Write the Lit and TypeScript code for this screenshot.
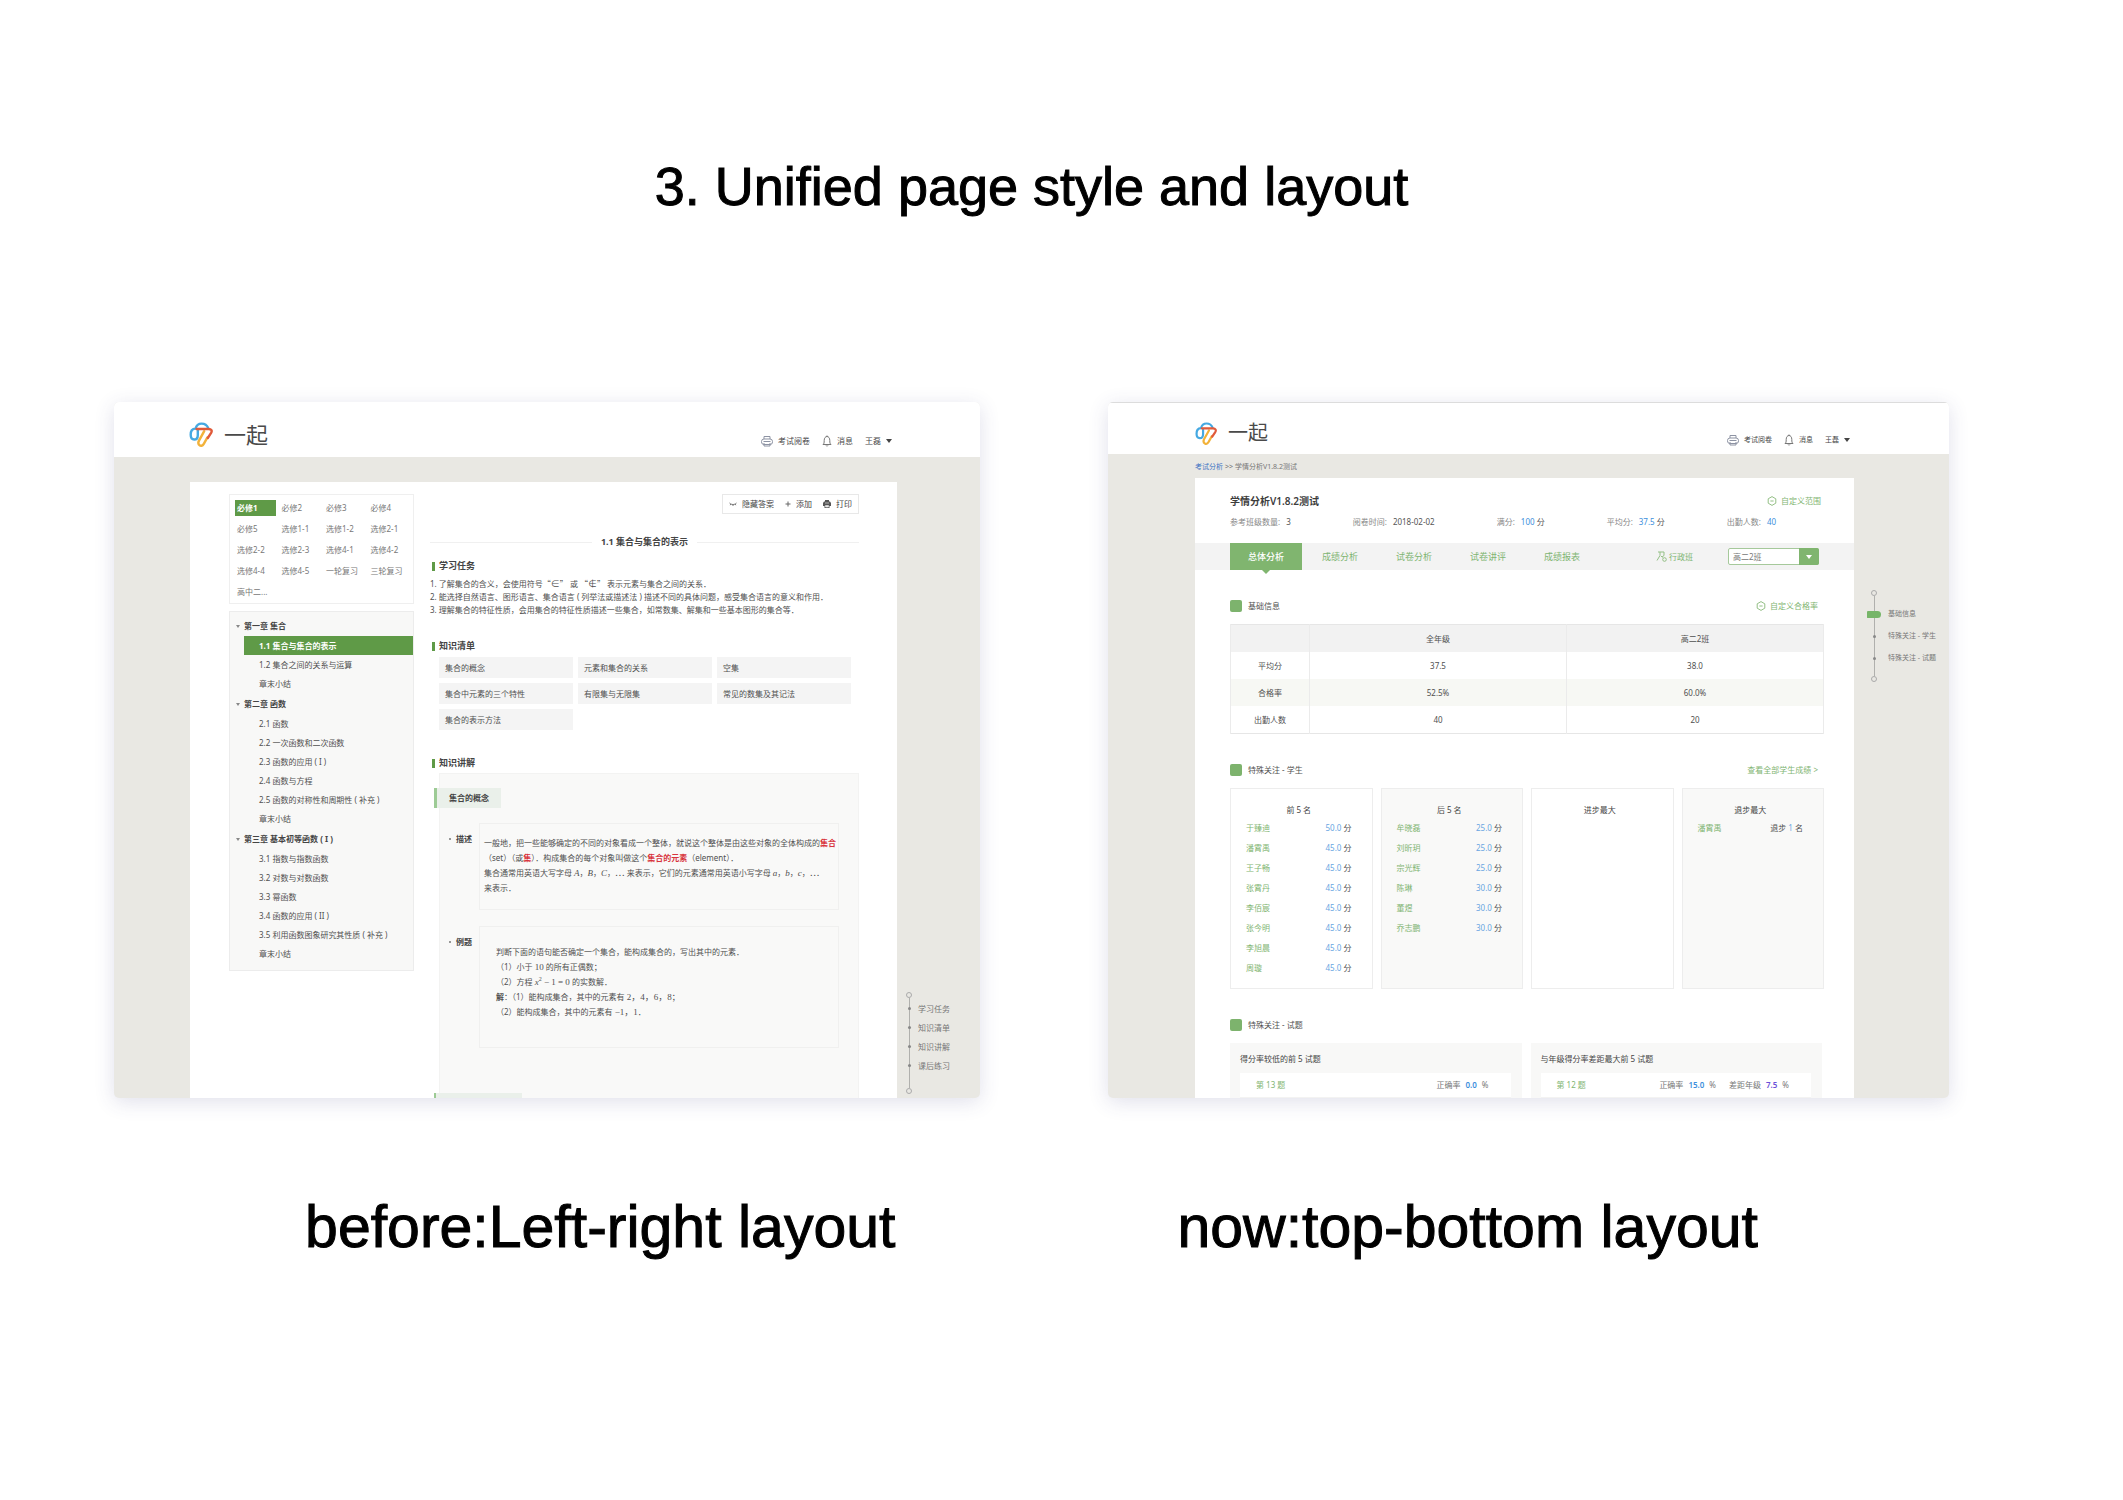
import { LitElement, html, css, svg, nothing } from "lit";
import { customElement, property } from "lit/decorators.js";
import { classMap } from "lit/directives/class-map.js";

const base = css`
  *,
  *::before,
  *::after {
    box-sizing: border-box;
  }
  :host {
    display: block;
    font-family: "Noto Sans", "Noto Sans CJK SC", sans-serif;
    font-size: 8px;
    line-height: 16px;
    color: #505050;
  }
  h1,
  h2,
  h3,
  h4,
  p,
  ul,
  ol,
  dl,
  dd {
    margin: 0;
    padding: 0;
    font-weight: 400;
    font-size: inherit;
  }
  ul,
  ol {
    list-style: none;
  }
  button {
    font: inherit;
    color: inherit;
    background: none;
    border: 0;
    margin: 0;
    padding: 0;
    text-align: left;
    white-space: nowrap;
    cursor: pointer;
  }
  a {
    color: inherit;
    text-decoration: none;
    white-space: nowrap;
  }
  svg {
    display: block;
    flex: none;
  }
`;

const logo = svg`
  <g fill="none" stroke-width="2.4" stroke-linejoin="round" stroke-linecap="round">
    <path d="M8.800 8.500v4.700c0 2.600-1.400 4.300-3.600 4.300S1.700 15.600 1.700 12.800c0-3.800 1.200-6.200 4.900-6.200C7.400 3.300 9.400 1.600 12.600 1.600c3.200 0 5.400 1.400 6.600 4.400" stroke="#45a9e2"/>
    <path d="M15.200 9.200 10 18.600c-1.200 2.400-.6 4 .8 4.800 1.500.8 3 .2 4-1.600L18.400 15.400" stroke="#f2b23a"/>
    <path d="M7.600 7H19.600c2.900 0 3.800 1.700 2.500 3.900L18.800 16" stroke="#e05a3a"/>
  </g>`;

const printer = svg`
  <g fill="none" stroke="#8d93a3" stroke-width="1">
    <path d="M3 4V1.500h6V4"/>
    <rect x=".5" y="4" width="11" height="5.500" rx="2.500"/>
    <path d="M2.500 6.500h7M3 8v3h6V8"/>
  </g>`;

const bell = svg`
  <g fill="none" stroke="#777" stroke-width="1">
    <path d="M1 9.500c1-.8 1.200-1.500 1.200-4C2.200 3 3.400 1.500 5 1.500s2.800 1.500 2.800 4c0 2.500.2 3.200 1.200 4z"/>
    <path d="M4 10.500c.4.800 1.600.8 2 0M5 .5v1"/>
  </g>`;

const target = svg`
  <g fill="none" stroke="#93bf85" stroke-width="1">
    <path d="M5 .6 8.800 2.800v4.400L5 9.400 1.200 7.200V2.800z" stroke-linejoin="round"/>
    <path d="M3.400 5h3.200"/>
  </g>`;

@customElement("app-header")
class AppHeader extends LitElement {
  @property({ type: Boolean, reflect: true }) compact = false;

  static styles = [
    base,
    css`
      .bar {
        display: flex;
        align-items: center;
        justify-content: space-between;
        padding: 12px 88px 4px 75px;
        height: 55px;
        background: #fff;
      }
      .brand {
        display: flex;
        align-items: center;
        gap: 11px;
        font-size: 22px;
        line-height: 26px;
        color: #4a4a4a;
      }
      .mark {
        margin-top: 2px;
      }
      .links {
        display: flex;
        align-items: center;
        padding-top: 14px;
        gap: 12px;
        color: #484848;
      }
      .link {
        display: flex;
        align-items: center;
        gap: 5px;
      }
      :host([compact]) .bar {
        height: 52px;
        padding: 12px 99px 4px 87px;
        border-top: 1px solid #dcdcdc;
      }
      :host([compact]) .brand {
        font-size: 20px;
      }
      :host([compact]) .links {
        font-size: 7px;
      }
    `,
  ];

  render() {
    const s = this.compact ? 22 : 24;
    return html`<header class="bar">
      <a class="brand" href="#home">
        <svg class="mark" width=${s} height=${s + 1} viewBox="0 0 24 25" aria-hidden="true">${logo}</svg>一起
      </a>
      <nav class="links">
        <a class="link" href="#marking"
          ><svg width="12" height="12" viewBox="0 0 12 12" aria-hidden="true">${printer}</svg>考试阅卷</a
        >
        <a class="link" href="#messages"
          ><svg width="10" height="12" viewBox="0 0 10 12" aria-hidden="true">${bell}</svg>消息</a
        >
        <button class="link">
          王磊<svg width="6" height="4" viewBox="0 0 6 4" aria-hidden="true"><path d="M0 0h6L3 4z" fill="#444" /></svg>
        </button>
      </nav>
    </header>`;
  }
}

@customElement("anchor-rail")
class AnchorRail extends LitElement {
  @property({ type: Array }) items: string[] = [];
  @property({ type: Number }) active = -1;
  @property({ type: Boolean, reflect: true }) compact = false;

  static styles = [
    base,
    css`
      .rail {
        display: flex;
        flex-direction: column;
        align-items: flex-start;
        color: #777;
      }
      .end {
        width: 6px;
        height: 6px;
        margin-left: 4px;
        border: 1px solid #aaa;
        border-radius: 50%;
      }
      .link,
      .line {
        display: grid;
        grid-template-columns: 14px auto;
        gap: 2px;
        align-items: center;
        height: 19px;
        background: linear-gradient(#b0b0ad, #b0b0ad) 7px 0 / 1px 100% no-repeat;
      }
      .dot {
        justify-self: center;
        width: 3px;
        height: 3px;
        border-radius: 50%;
        background: #888;
      }
      .line {
        height: 1px;
      }
      .line.tail {
        height: 13px;
      }
      .mark {
        width: 14px;
        height: 7px;
        border-radius: 1px 4px 4px 1px;
        background: #76b568;
      }
      :host([compact]) .rail {
        font-size: 7px;
      }
      :host([compact]) .link {
        height: 22px;
        gap: 7px;
      }
      :host([compact]) .line {
        height: 7px;
      }
    `,
  ];

  render() {
    return html`<nav class="rail">
      <span class="end"></span><span class="line"></span>
      ${this.items.map(
        (t, i) => html`<a class="link" href="#s${i}"><span class=${i === this.active ? "mark" : "dot"}></span>${t}</a>`
      )}
      <span class="line tail"></span><span class="end"></span>
    </nav>`;
  }
}

const books = [
  "必修1", "必修2", "必修3", "必修4", "必修5", "选修1-1", "选修1-2", "选修2-1", "选修2-2",
  "选修2-3", "选修4-1", "选修4-2", "选修4-4", "选修4-5", "一轮复习", "三轮复习", "高中二...",
];

const chapters = [
  { name: "第一章 集合", items: ["1.1 集合与集合的表示", "1.2 集合之间的关系与运算", "章末小结"] },
  {
    name: "第二章 函数",
    items: ["2.1 函数", "2.2 一次函数和二次函数", "2.3 函数的应用 ( I )", "2.4 函数与方程", "2.5 函数的对称性和周期性 ( 补充 )", "章末小结"],
  },
  {
    name: "第三章 基本初等函数 ( I )",
    items: ["3.1 指数与指数函数", "3.2 对数与对数函数", "3.3 幂函数", "3.4 函数的应用 ( II )", "3.5 利用函数图象研究其性质 ( 补充 )", "章末小结"],
  },
];

const points = ["集合的概念", "元素和集合的关系", "空集", "集合中元素的三个特性", "有限集与无限集", "常见的数集及其记法", "集合的表示方法"];

@customElement("lesson-page")
class LessonPage extends LitElement {
  static styles = [
    base,
    css`
      :host {
        display: flex;
        flex-direction: column;
        background: #e9e8e3;
      }
      .body {
        flex: 1;
        display: grid;
        grid-template-columns: minmax(0, 1fr) 83px;
        padding: 25px 0 0 76px;
      }
      .sheet {
        display: grid;
        grid-template-columns: 185px minmax(0, 1fr);
        gap: 16px;
        padding: 12px 38px 0 39px;
        background: #fff;
      }
      .side {
        align-self: start;
        display: flex;
        flex-direction: column;
        gap: 7px;
      }
      .books {
        display: grid;
        grid-template-columns: repeat(4, minmax(0, 1fr));
        gap: 5px 4px;
        padding: 5px 4px 3px 5px;
        border: 1px solid #efefef;
        color: #777;
      }
      .book {
        width: 100%;
        padding-left: 2px;
      }
      .book.on {
        background: #5f9a47;
        color: #fff;
        font-weight: 700;
      }
      .tree {
        display: flex;
        flex-direction: column;
        gap: 1px;
        padding: 4px 0 7px;
        border: 1px solid #ececec;
        background: #f8f8f7;
      }
      .chapter {
        display: flex;
        align-items: center;
        gap: 4px;
        padding-left: 6px;
        line-height: 20px;
        font-weight: 700;
        color: #444;
      }
      .lesson {
        display: block;
        margin-left: 14px;
        padding-left: 15px;
        line-height: 19px;
      }
      .lesson.on {
        background: #5f9a47;
        color: #fff;
        font-weight: 700;
      }
      .main {
        display: flex;
        flex-direction: column;
        min-width: 0;
      }
      .tools {
        align-self: flex-end;
        display: flex;
        gap: 11px;
        padding: 1px 6px;
        border: 1px solid #e8e8e8;
      }
      .tool {
        display: flex;
        align-items: center;
        gap: 5px;
        color: #444;
      }
      .title {
        display: flex;
        align-items: center;
        gap: 9px;
        margin-top: 20px;
        font-size: 9px;
        font-weight: 700;
        color: #444;
      }
      .title::before,
      .title::after {
        content: "";
        flex: 1;
        border-top: 1px solid #f0f0f0;
      }
      .sec {
        display: flex;
        align-items: center;
        gap: 4px;
        margin-left: 2px;
        font-size: 9px;
        font-weight: 700;
        color: #444;
      }
      .sec::before {
        content: "";
        width: 3px;
        height: 9px;
        background: #5f9a47;
      }
      .first {
        margin-top: 8px;
      }
      .tasks {
        margin: 3px 0 22px;
        line-height: 13px;
        white-space: nowrap;
      }
      .tasks li {
        height: 13px;
      }
      .points {
        display: grid;
        grid-template-columns: repeat(3, minmax(0, 1fr));
        gap: 5px;
        margin: 3px 8px 25px 9px;
      }
      .point {
        padding-left: 6px;
        line-height: 21px;
        background: #f4f4f4;
      }
      .panel {
        flex: 1;
        display: flex;
        flex-direction: column;
        margin: 2px 0 0 9px;
        border: 1px solid #f3f3f2;
        border-bottom: 0;
        background: #f9f9f8;
      }
      .tag {
        align-self: flex-start;
        margin: 14px 0 15px -6px;
        padding: 0 12px;
        border-left: 3px solid #9dcb95;
        line-height: 20px;
        font-weight: 700;
        color: #444;
        background: #eaf0ea;
      }
      .entry {
        display: grid;
        grid-template-columns: 30px minmax(0, 1fr);
        padding: 0 19px 16px 9px;
      }
      .label {
        display: flex;
        align-items: center;
        gap: 5px;
        height: 16px;
        margin-top: 8px;
        font-weight: 700;
        color: #444;
      }
      .label::before {
        content: "";
        width: 2px;
        height: 2px;
        border-radius: 50%;
        background: #777;
      }
      .box {
        display: grid;
        align-content: start;
        grid-auto-rows: 15px;
        padding: 11px 4px 14px;
        border: 1px solid #f0f0ef;
        line-height: 15px;
        white-space: nowrap;
      }
      .box.example {
        padding: 17px 16px 28px;
      }
      .red {
        font-weight: 700;
        color: #d8343c;
      }
      .math {
        font-family: "Liberation Serif", "Noto Sans CJK SC", serif;
        font-size: 9px;
      }
      .wide {
        font-family: "Noto Sans CJK SC", sans-serif;
      }
      sup {
        font-size: 6px;
        line-height: 0;
      }
      .next {
        width: 88px;
        height: 5px;
        margin: auto 0 0 -6px;
        border-left: 2px solid #9dcb95;
        background: #eaf0ea;
      }
      .gutter {
        align-self: end;
        padding-left: 5px;
        padding-bottom: 4px;
      }
    `,
  ];

  render() {
    const m = (t: unknown) => html`<span class="math">${t}</span>`;
    const i = (t: string) => html`<i class="math">${t}</i>`;
    const q = (t: string) => html`<span class="wide">“</span>${m(t)}<span class="wide">”</span>`;
    return html`
      <app-header></app-header>
      <div class="body">
        <div class="sheet">
          <aside class="side">
            <div class="books">
              ${books.map((b, k) => html`<button class=${classMap({ book: true, on: k === 0 })}>${b}</button>`)}
            </div>
            <ul class="tree">
              ${chapters.map(
                (c, k) => html`<li>
                  <button class="chapter">
                    <svg width="4" height="3" viewBox="0 0 4 3" aria-hidden="true"><path d="M0 0h4L2 3z" fill="#888" /></svg>${c.name}
                  </button>
                  ${c.items.map(
                    (t, n) => html`<a href="#l${k}${n}" class=${classMap({ lesson: true, on: k + n === 0 })}>${t}</a>`
                  )}
                </li>`
              )}
            </ul>
          </aside>
          <main class="main">
            <div class="tools">
              <button class="tool">
                <svg width="8" height="8" viewBox="0 0 8 8" aria-hidden="true">
                  <path d="M.5 3C2.500 5 5.500 5 7.500 3M4 4.500V6M1.800 4 1.200 5.200M6.200 4l.6 1.200" fill="none" stroke="#777" />
                </svg>隐藏答案
              </button>
              <button class="tool">
                <svg width="6" height="6" viewBox="0 0 6 6" aria-hidden="true"><path d="M3 .5v5M.5 3h5" stroke="#666" /></svg>添加
              </button>
              <button class="tool">
                <svg width="8" height="8" viewBox="0 0 8 8" aria-hidden="true">
                  <path d="M2 0h4v1.500h1L8 3v3H6.500v2h-5V6H0V3l1-1.500h1z" fill="#555" />
                  <path d="M2 3h4M2.500 5.500h3v1.500h-3z" stroke="#ddd" stroke-width=".7" fill="#eee" />
                </svg>打印
              </button>
            </div>
            <h1 class="title">1.1 集合与集合的表示</h1>
            <h2 class="sec first">学习任务</h2>
            <ol class="tasks">
              <li>1. 了解集合的含义，会使用符号${q("∈")} 或 ${q("∉")} 表示元素与集合之间的关系．</li>
              <li>2. 能选择自然语言、图形语言、集合语言 ( 列举法或描述法 ) 描述不同的具体问题，感受集合语言的意义和作用．</li>
              <li>3. 理解集合的特征性质，会用集合的特征性质描述一些集合，如常数集、解集和一些基本图形的集合等．</li>
            </ol>
            <h2 class="sec">知识清单</h2>
            <ul class="points">
              ${points.map((p) => html`<li class="point">${p}</li>`)}
            </ul>
            <h2 class="sec">知识讲解</h2>
            <section class="panel">
              <h3 class="tag">集合的概念</h3>
              <div class="entry">
                <h4 class="label">描述</h4>
                <div class="box">
                  <p>一般地，把一些能够确定的不同的对象看成一个整体，就说这个整体是由这些对象的全体构成的<b class="red">集合</b></p>
                  <p>（set）（或<b class="red">集</b>）．构成集合的每个对象叫做这个<b class="red">集合的元素</b>（element）．</p>
                  <p>集合通常用英语大写字母 ${i("A")}，${i("B")}，${i("C")}，${m("⋯")} 来表示，它们的元素通常用英语小写字母 ${i("a")}，${i("b")}，${i("c")}，${m("⋯")}</p>
                  <p>来表示．</p>
                </div>
              </div>
              <div class="entry">
                <h4 class="label">例题</h4>
                <div class="box example">
                  <p>判断下面的语句能否确定一个集合，能构成集合的，写出其中的元素．</p>
                  <p>（1）小于 ${m("10")} 的所有正偶数；</p>
                  <p>（2）方程 ${m(html`<i>x</i><sup>2</sup> − 1 = 0`)} 的实数解．</p>
                  <p><b>解</b>：（1）能构成集合，其中的元素有 ${m("2，4，6，8")}；</p>
                  <p>（2）能构成集合，其中的元素有 ${m("−1，1")}．</p>
                </div>
              </div>
              <div class="next"></div>
            </section>
          </main>
        </div>
        <anchor-rail class="gutter" .items=${["学习任务", "知识清单", "知识讲解", "课后练习"]}></anchor-rail>
      </div>
    `;
  }
}

const stats: [string, string, string, boolean][] = [
  ["参考班级数量:", "3", "", false],
  ["阅卷时间:", "2018-02-02", "", false],
  ["满分:", "100", "分", true],
  ["平均分:", "37.5", "分", true],
  ["出勤人数:", "40", "", true],
];

const rows = [
  ["平均分", "37.5", "38.0"],
  ["合格率", "52.5%", "60.0%"],
  ["出勤人数", "40", "20"],
];

type Entry = [string, string, string, string];
const groups: { title: string; list: Entry[] }[] = [
  {
    title: "前 5 名",
    list: [
      ["于臻迪", "", "50.0", "分"],
      ["潘霄禹", "", "45.0", "分"],
      ["王子畅", "", "45.0", "分"],
      ["张霄丹", "", "45.0", "分"],
      ["李佰宸", "", "45.0", "分"],
      ["张今明", "", "45.0", "分"],
      ["李旭晨", "", "45.0", "分"],
      ["周璇", "", "45.0", "分"],
    ],
  },
  {
    title: "后 5 名",
    list: [
      ["牟晓磊", "", "25.0", "分"],
      ["刘昕玥", "", "25.0", "分"],
      ["宗光辉", "", "25.0", "分"],
      ["陈琳", "", "30.0", "分"],
      ["董煜", "", "30.0", "分"],
      ["乔志鹏", "", "30.0", "分"],
    ],
  },
  { title: "进步最大", list: [] },
  { title: "退步最大", list: [["潘霄禹", "退步", "1", "名"]] },
];

@customElement("report-page")
class ReportPage extends LitElement {
  static styles = [
    base,
    css`
      :host {
        display: flex;
        flex-direction: column;
        background: #e9e8e3;
      }
      .body {
        flex: 1;
        display: grid;
        grid-template-columns: minmax(0, 1fr) 95px;
        grid-template-rows: 24px 1fr;
        padding-left: 87px;
      }
      .crumbs {
        grid-column: 1 / -1;
        display: flex;
        gap: 2px;
        padding-top: 1px;
        line-height: 23px;
        font-size: 7px;
        color: #777;
      }
      .crumbs a {
        color: #3f74c4;
      }
      .sheet {
        display: flex;
        flex-direction: column;
        background: #fff;
      }
      .top {
        padding: 13px 33px 13px 35px;
      }
      .line {
        display: flex;
        align-items: center;
        justify-content: space-between;
      }
      .name {
        font-size: 10px;
        line-height: 20px;
        font-weight: 600;
        color: #3c3c3c;
      }
      .action {
        display: flex;
        align-items: center;
        gap: 4px;
        color: #7fb572;
      }
      .stats {
        display: flex;
        gap: 62px;
        padding-top: 3px;
        white-space: nowrap;
      }
      .stat {
        display: flex;
        gap: 6px;
        color: #888;
      }
      .stat dd {
        color: #555;
      }
      .blue {
        color: #3d8fdc;
      }
      .tabs {
        display: flex;
        align-items: center;
        gap: 2px;
        height: 27px;
        padding: 0 35px;
        background: #f3f3f3;
      }
      .tab {
        position: relative;
        width: 72px;
        line-height: 27px;
        font-size: 9px;
        text-align: center;
        color: #7fb572;
      }
      .tab.on {
        background: #80b56f;
        color: #fff;
        font-weight: 500;
      }
      .tab.on::after {
        content: "";
        position: absolute;
        top: 100%;
        left: calc(50% - 4px);
        border: 4px solid transparent;
        border-top-color: #80b56f;
        border-bottom: 0;
      }
      .kind {
        margin-left: auto;
        gap: 2px;
      }
      .picker {
        position: relative;
        margin-left: 33px;
      }
      .select {
        display: block;
        width: 91px;
        height: 17px;
        padding: 0 24px 0 4px;
        border: 1px solid #a6c99b;
        border-radius: 2px;
        appearance: none;
        font: inherit;
        color: #777;
        background: #fff;
      }
      .arrow {
        position: absolute;
        top: 0;
        right: 0;
        display: grid;
        place-items: center;
        width: 20px;
        height: 17px;
        border-radius: 0 2px 2px 0;
        background: #80b56f;
        pointer-events: none;
      }
      .content {
        display: flex;
        flex-direction: column;
        padding: 28px 30px 0 35px;
      }
      .sec {
        display: flex;
        align-items: center;
        gap: 6px;
      }
      .sec::before {
        content: "";
        width: 12px;
        height: 12px;
        border-radius: 2px;
        background: #7db36d;
      }
      .head {
        padding-right: 6px;
      }
      table {
        width: 100%;
        margin: 10px 0 28px;
        border: 1px solid #e6e6e6;
        border-collapse: collapse;
        table-layout: fixed;
      }
      .first {
        width: 79px;
      }
      th,
      td {
        padding: 0;
        border: solid #ebebeb;
        border-width: 0 1px;
        line-height: 27px;
        font-weight: 400;
        text-align: center;
      }
      thead th {
        background: #f2f2f2;
      }
      tbody tr:nth-child(2) {
        background: #f7f8f4;
      }
      .groups {
        display: grid;
        grid-template-columns: repeat(4, minmax(0, 1fr));
        gap: 8px;
        margin: 10px 0 28px;
      }
      .group {
        padding: 13px 20px 10px 15px;
        border: 1px solid #ededed;
      }
      .group:nth-child(even) {
        background: #f9f9f8;
      }
      .cap {
        text-align: center;
        color: #444;
      }
      .who {
        display: flex;
        justify-content: space-between;
        line-height: 20px;
        white-space: nowrap;
      }
      .green {
        color: #7fb572;
      }
      .sky {
        color: #69a6e2;
      }
      .quizzes {
        display: grid;
        grid-template-columns: repeat(2, minmax(0, 1fr));
        gap: 9px;
        margin: 10px 2px 0 0;
      }
      .quiz {
        padding: 8px 11px 0 10px;
        background: #f8f8f7;
      }
      .quiz h3 {
        color: #444;
      }
      .item {
        display: flex;
        gap: 13px;
        margin-top: 6px;
        padding: 0 22px 0 16px;
        line-height: 24px;
        white-space: nowrap;
        background: #fff;
        border-bottom: 1px solid #f3f3f2;
      }
      .item .green {
        margin-right: auto;
      }
      .pair {
        display: flex;
        gap: 5px;
        color: #777;
      }
      .pair b {
        font-weight: 600;
      }
      .violet {
        color: #6a50d8;
      }
      .gutter {
        padding: 112px 0 0 13px;
      }
    `,
  ];

  render() {
    const gear = (t: string) => html`<button class="action">
      <svg width="10" height="10" viewBox="0 0 10 10" aria-hidden="true">${target}</svg>${t}
    </button>`;
    return html`
      <app-header compact></app-header>
      <div class="body">
        <nav class="crumbs"><a href="#exam">考试分析</a><span>&gt;&gt;</span><span>学情分析V1.8.2测试</span></nav>
        <main class="sheet">
          <div class="top">
            <div class="line">
              <h1 class="name">学情分析V1.8.2测试</h1>
              ${gear("自定义范围")}
            </div>
            <dl class="stats">
              ${stats.map(
                ([k, v, u, hot]) => html`<div class="stat">
                  <dt>${k}</dt>
                  <dd><span class=${hot ? "blue" : ""}>${v}</span>${u ? html` ${u}` : nothing}</dd>
                </div>`
              )}
            </dl>
          </div>
          <div class="tabs">
            ${["总体分析", "成绩分析", "试卷分析", "试卷讲评", "成绩报表"].map(
              (t, i) => html`<button class=${classMap({ tab: true, on: i === 0 })}>${t}</button>`
            )}
            <button class="action kind">
              <svg width="11" height="11" viewBox="0 0 11 11" aria-hidden="true">
                <path d="M2 1h6v3.500L6 6M4 1v3.500L1 9.500M5 5l1.500 1.500" fill="none" stroke="#93bf85" />
                <circle cx="8.500" cy="8.500" r="1.800" fill="none" stroke="#93bf85" />
              </svg>行政班
            </button>
            <div class="picker">
              <select class="select" aria-label="班级"><option>高二2班</option></select>
              <span class="arrow"><svg width="6" height="4" viewBox="0 0 6 4" aria-hidden="true"><path d="M0 0h6L3 4z" fill="#fff" /></svg></span>
            </div>
          </div>
          <div class="content">
            <div class="line head">
              <h2 class="sec">基础信息</h2>
              ${gear("自定义合格率")}
            </div>
            <table>
              <thead>
                <tr><th class="first"></th><th>全年级</th><th>高二2班</th></tr>
              </thead>
              <tbody>
                ${rows.map(([h, a, b]) => html`<tr><th>${h}</th><td>${a}</td><td>${b}</td></tr>`)}
              </tbody>
            </table>
            <div class="line head">
              <h2 class="sec">特殊关注 - 学生</h2>
              <a class="green" href="#all">查看全部学生成绩 &gt;</a>
            </div>
            <div class="groups">
              ${groups.map(
                (g) => html`<section class="group">
                  <h3 class="cap">${g.title}</h3>
                  <ul>
                    ${g.list.map(
                      ([n, pre, v, u]) => html`<li class="who">
                        <a class="green" href="#student">${n}</a>
                        <span>${pre} <span class="sky">${v}</span> ${u}</span>
                      </li>`
                    )}
                  </ul>
                </section>`
              )}
            </div>
            <h2 class="sec">特殊关注 - 试题</h2>
            <div class="quizzes">
              <section class="quiz">
                <h3>得分率较低的前 5 试题</h3>
                <div class="item">
                  <a class="green" href="#q13">第 13 题</a>
                  <span class="pair">正确率 <b class="blue">0.0</b> %</span>
                </div>
              </section>
              <section class="quiz">
                <h3>与年级得分率差距最大前 5 试题</h3>
                <div class="item">
                  <a class="green" href="#q12">第 12 题</a>
                  <span class="pair">正确率 <b class="blue">15.0</b> %</span>
                  <span class="pair">差距年级 <b class="violet">7.5</b> %</span>
                </div>
              </section>
            </div>
          </div>
        </main>
        <anchor-rail class="gutter" compact .active=${0} .items=${["基础信息", "特殊关注 - 学生", "特殊关注 - 试题"]}></anchor-rail>
      </div>
    `;
  }
}

@customElement("app-root")
class AppRoot extends LitElement {
  static styles = css`
    :host {
      display: block;
      min-height: 100vh;
      background: #fff;
      color: #000;
      font-family: "Liberation Sans", Arial, sans-serif;
      -webkit-text-stroke: 0 #000;
    }
    .title,
    .captions {
      -webkit-text-stroke: 1px #000;
    }
    .title {
      margin: 0;
      padding: 154px 174px 0 114px;
      font-size: 54px;
      line-height: 64px;
      font-weight: 400;
      text-align: center;
    }
    .shots {
      display: grid;
      grid-template-columns: minmax(0, 866fr) minmax(0, 841fr);
      gap: 128px;
      padding: 184px 174px 0 114px;
    }
    .shot {
      overflow: hidden;
      border-radius: 5px;
      box-shadow: 0 4px 20px rgba(60, 60, 130, 0.16);
    }
    .captions {
      display: flex;
      justify-content: center;
      gap: 282px;
      padding: 94px 174px 0 114px;
      font-size: 59px;
      line-height: 70px;
    }
    .captions p {
      margin: 0;
      white-space: nowrap;
    }
  `;

  render() {
    return html`
      <h1 class="title">3. Unified page style and layout</h1>
      <div class="shots">
        <lesson-page class="shot"></lesson-page>
        <report-page class="shot"></report-page>
      </div>
      <div class="captions">
        <p>before:Left-right layout</p>
        <p>now:top-bottom layout</p>
      </div>
    `;
  }
}
